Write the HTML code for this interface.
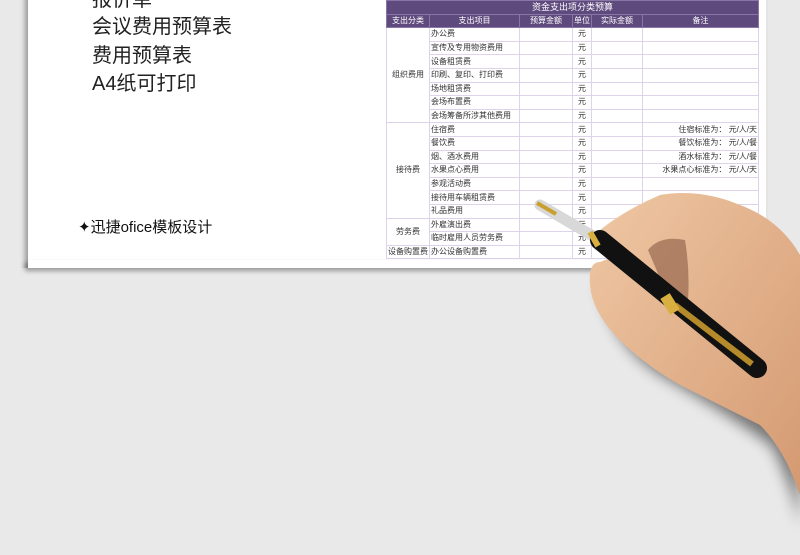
<!DOCTYPE html>
<html><head><meta charset="utf-8"><style>
body{margin:0;width:800px;height:555px;overflow:hidden;background:#e9e9e9;position:relative;font-family:"Liberation Sans","Noto Sans CJK SC",sans-serif;}
.card{position:absolute;left:28px;top:-10px;width:738px;height:278px;background:#fff;box-shadow:-3px 3px 5px rgba(0,0,0,.35);}
.big{position:absolute;left:92px;font-size:20px;color:#222;line-height:24px;}
.foot{position:absolute;left:78px;top:216px;font-size:15px;color:#111;}
table{position:absolute;left:386px;top:0;width:372px;border-collapse:collapse;font-size:8px;color:#333;table-layout:fixed;}
td{border:1px solid #ddd3ea;height:12.6px;padding:0 1px;white-space:nowrap;overflow:hidden;line-height:12px}
.t td{background:#5f4a7e;color:#fff;text-align:center;border-color:#8a76a6}
.c{text-align:center}.r{text-align:right}
</style></head><body>
<div class="card"></div>
<div class="big" style="top:-12px">报价单</div>
<div class="big" style="top:15px">会议费用预算表</div>
<div class="big" style="top:44px">费用预算表</div>
<div class="big" style="top:72px">A4纸可打印</div>
<div class="foot">✦迅捷ofice模板设计</div>
<table>
<colgroup><col style="width:43px"><col style="width:90px"><col style="width:53px"><col style="width:19px"><col style="width:51px"><col style="width:116px"></colgroup>
<tr class="t"><td colspan="6" style="font-size:9px">资金支出项分类预算</td></tr>
<tr class="t"><td>支出分类</td><td>支出项目</td><td>预算金额</td><td>单位</td><td>实际金额</td><td>备注</td></tr>
<tr><td rowspan="7" class="c">组织费用</td><td>办公费</td><td></td><td class="c">元</td><td></td><td></td></tr>
<tr><td>宣传及专用物资费用</td><td></td><td class="c">元</td><td></td><td></td></tr>
<tr><td>设备租赁费</td><td></td><td class="c">元</td><td></td><td></td></tr>
<tr><td>印刷、复印、打印费</td><td></td><td class="c">元</td><td></td><td></td></tr>
<tr><td>场地租赁费</td><td></td><td class="c">元</td><td></td><td></td></tr>
<tr><td>会场布置费</td><td></td><td class="c">元</td><td></td><td></td></tr>
<tr><td>会场筹备所涉其他费用</td><td></td><td class="c">元</td><td></td><td></td></tr>
<tr><td rowspan="7" class="c">接待费</td><td>住宿费</td><td></td><td class="c">元</td><td></td><td class="r">住宿标准为： 元/人/天</td></tr>
<tr><td>餐饮费</td><td></td><td class="c">元</td><td></td><td class="r">餐饮标准为： 元/人/餐</td></tr>
<tr><td>烟、酒水费用</td><td></td><td class="c">元</td><td></td><td class="r">酒水标准为： 元/人/餐</td></tr>
<tr><td>水果点心费用</td><td></td><td class="c">元</td><td></td><td class="r">水果点心标准为： 元/人/天</td></tr>
<tr><td>参观活动费</td><td></td><td class="c">元</td><td></td><td></td></tr>
<tr><td>接待用车辆租赁费</td><td></td><td class="c">元</td><td></td><td></td></tr>
<tr><td>礼品费用</td><td></td><td class="c">元</td><td></td><td></td></tr>
<tr><td rowspan="2" class="c">劳务费</td><td>外雇演出费</td><td></td><td class="c">元</td><td></td><td></td></tr>
<tr><td>临时雇用人员劳务费</td><td></td><td class="c">元</td><td></td><td></td></tr>
<tr><td class="c">设备购置费</td><td>办公设备购置费</td><td></td><td class="c">元</td><td></td><td></td></tr>
</table>
<div style="position:absolute;left:0;top:268px;width:800px;height:287px;background:#e9e9e9"></div>
<div style="position:absolute;left:28px;top:260px;width:738px;height:8px;background:#fff;box-shadow:-3px 3px 5px rgba(0,0,0,.35)"></div>
<svg width="800" height="555" style="position:absolute;left:0;top:0">
<defs><filter id="b"><feGaussianBlur stdDeviation="7"/></filter>
<linearGradient id="sk" x1="0" y1="0" x2="1" y2="1"><stop offset="0" stop-color="#efc8a4"/><stop offset="1" stop-color="#d49a72"/></linearGradient></defs>
<path d="M600,285 Q612,345 662,376 Q730,415 772,446 Q792,485 800,525 L800,300 Z" fill="#000" opacity=".5" filter="url(#b)"/>
<path d="M600,230 Q625,210 660,195 Q700,188 740,205 Q780,220 800,255 L800,495 Q785,450 760,425 Q720,405 680,385 Q640,362 615,335 Q592,310 590,285 Q588,262 600,262 Q610,258 620,255 Z" fill="url(#sk)"/>
<path d="M648,250 Q660,235 685,240 Q690,270 688,300 Q680,295 665,290 Z" fill="#8a5a45" opacity=".6"/>
<line x1="540" y1="205" x2="598" y2="239" stroke="#d8d8d8" stroke-width="11" stroke-linecap="round"/>
<line x1="537" y1="203" x2="556" y2="214" stroke="#c9a030" stroke-width="4"/>
<line x1="600" y1="240" x2="757" y2="368" stroke="#111" stroke-width="20" stroke-linecap="round"/>
<line x1="675" y1="305" x2="752" y2="364" stroke="#b58a2a" stroke-width="6"/>
<line x1="665" y1="296" x2="675" y2="312" stroke="#d9b040" stroke-width="11"/>
<line x1="590" y1="232" x2="598" y2="246" stroke="#d9b040" stroke-width="6"/>
</svg>
</body></html>
